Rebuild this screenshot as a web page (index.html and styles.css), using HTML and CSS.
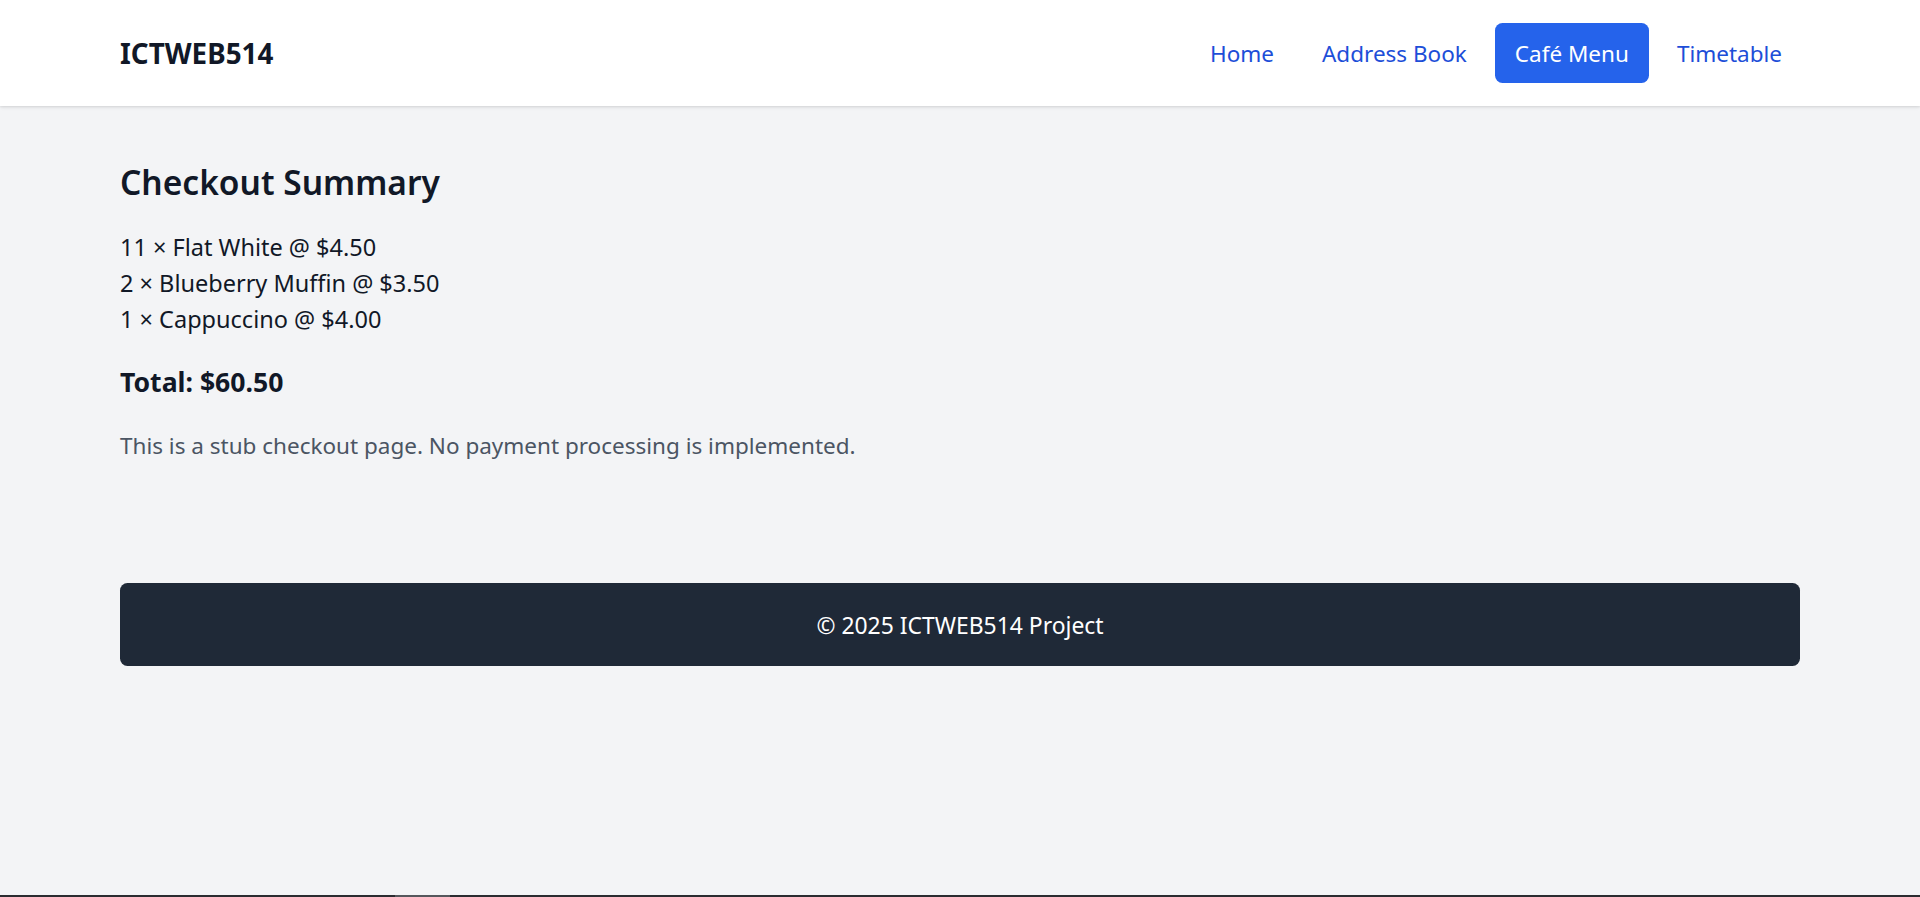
FILE: index.html
```html
<!DOCTYPE html>
<html lang="en">
<head>
<meta charset="utf-8">
<title>Checkout Summary</title>
<link rel="stylesheet" href="styles.css">
</head>
<body>
<header class="site-header">
  <div class="container header-inner">
    <a class="brand" href="#">ICTWEB514</a>
    <nav class="nav">
      <a class="nav-link" href="#">Home</a>
      <a class="nav-link" href="#">Address Book</a>
      <a class="nav-link active" href="#">Café Menu</a>
      <a class="nav-link" href="#">Timetable</a>
    </nav>
  </div>
</header>
<main class="container main">
  <h1 class="title">Checkout Summary</h1>
  <ul class="items">
    <li>11 × Flat White @ $4.50</li>
    <li>2 × Blueberry Muffin @ $3.50</li>
    <li>1 × Cappuccino @ $4.00</li>
  </ul>
  <p class="total">Total: $60.50</p>
  <p class="note">This is a stub checkout page. No payment processing is implemented.</p>
</main>
<footer class="container footer">
  <div class="footer-box">© 2025 ICTWEB514 Project</div>
</footer>
<div class="hscroll"><div class="hscroll-thumb"></div></div>
</body>
</html>
```
FILE: styles.css
```css
html, body {
  margin: 0;
  padding: 0;
}
body {
  background: #f3f4f6;
  color: #111827;
  font-family: "Noto Sans", "Open Sans", sans-serif;
  min-height: 897px;
}
.container {
  width: 1680px;
  margin: 0 auto;
}
.site-header {
  background: #ffffff;
  height: 106px;
  box-shadow: 0 1px 4px rgba(0, 0, 0, 0.1), 0 1px 2px rgba(0, 0, 0, 0.06);
}
.header-inner {
  height: 106px;
  display: flex;
  align-items: center;
  justify-content: space-between;
}
.brand {
  font-size: 27.8px;
  font-weight: 700;
  color: #111827;
  text-decoration: none;
  line-height: 40px;
}
.nav {
  display: flex;
  gap: 8px;
  margin-right: -2px;
}
.nav-link {
  font-size: 22.5px;
  line-height: 35px;
  padding: 12.5px 20px;
  border-radius: 7.5px;
  color: #1d4ed8;
  text-decoration: none;
}
.nav-link.active {
  background: #2563eb;
  color: #ffffff;
}
.main {
  padding-top: 55.5px;
}
.title {
  margin: 0 0 27px;
  font-size: 33.5px;
  line-height: 40px;
  font-weight: 600;
}
.items {
  list-style: none;
  margin: 0;
  padding: 0;
  font-size: 23.5px;
  line-height: 36px;
}
.total {
  margin: 28.5px 0 0;
  font-size: 26.6px;
  line-height: 35px;
  font-weight: 700;
}
.note {
  margin: 28px 0 0;
  font-size: 22.5px;
  line-height: 35px;
  color: #4b5563;
}
.footer {
  margin-top: 119.5px;
}
.footer-box {
  background: #1f2937;
  color: #ffffff;
  height: 83px;
  border-radius: 7.5px;
  display: flex;
  align-items: center;
  justify-content: center;
  padding-top: 2px;
  box-sizing: border-box;
  font-size: 22.9px;
  line-height: 35px;
}
.hscroll {
  position: fixed;
  left: 0;
  right: 0;
  bottom: 0;
  height: 2px;
  background: #2b2c30;
}
.hscroll-thumb {
  position: absolute;
  left: 395px;
  width: 55px;
  top: 0;
  bottom: 0;
  background: #55575c;
}
```
